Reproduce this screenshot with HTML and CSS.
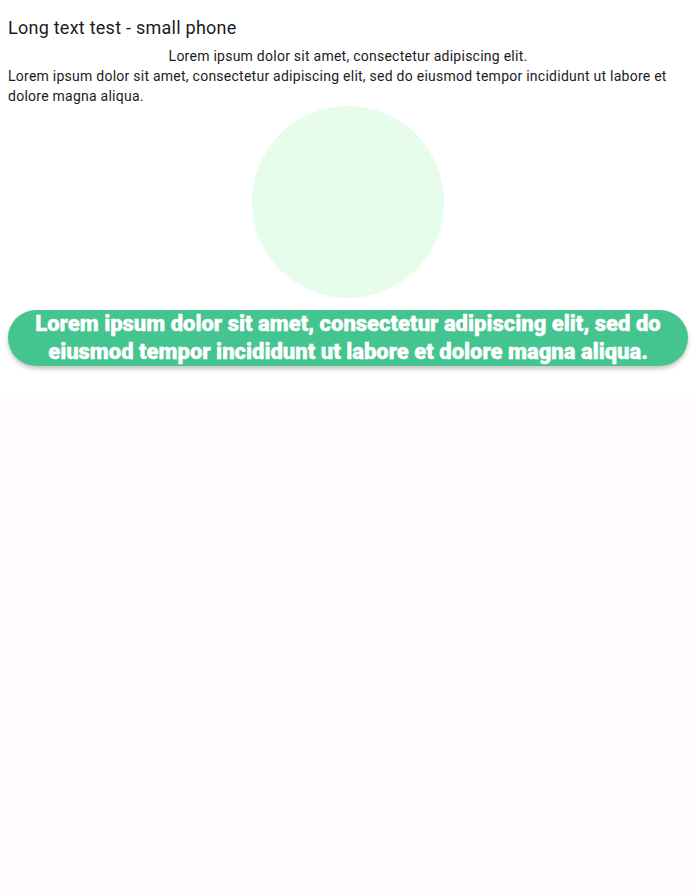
FILE: index.html
```html
<!DOCTYPE html>
<html>
<head>
<meta charset="utf-8">
<link rel="stylesheet" href="styles.css">
</head>
<body>
<div class="screen">
  <h1 class="title">Long text test - small phone</h1>
  <p class="centered">Lorem ipsum dolor sit amet, consectetur adipiscing elit.</p>
  <p class="body">Lorem ipsum dolor sit amet, consectetur adipiscing elit, sed do eiusmod tempor incididunt ut labore et dolore magna aliqua.</p>
  <div class="circle-row"><div class="circle"></div></div>
  <button class="cta">Lorem ipsum dolor sit amet, consectetur adipiscing elit, sed do eiusmod tempor incididunt ut labore et dolore magna aliqua.</button>
</div>
</body>
</html>
```

FILE: styles.css
```css
html, body {
  margin: 0;
  padding: 0;
  background: #fffbfe;
  height: 100%;
}
body {
  font-family: Roboto, "Noto Sans", sans-serif;
  color: #1c1b1f;
}
.screen {
  background: #ffffff;
  padding: 16px 8px 26px;
  display: flex;
  flex-direction: column;
}
.title {
  margin: 0;
  font-size: 18px;
  font-weight: 400;
  line-height: 24px;
  letter-spacing: 0.25px;
}
.centered {
  margin: 6px 0 0;
  font-size: 14px;
  line-height: 20px;
  letter-spacing: 0.25px;
  text-align: center;
}
.body {
  margin: 0;
  font-size: 14px;
  line-height: 20px;
  letter-spacing: 0.25px;
}
.circle-row {
  display: flex;
  justify-content: center;
}
.circle {
  width: 192px;
  height: 192px;
  border-radius: 50%;
  background: #e6fdeb;
}
.cta {
  margin-top: 12px;
  border: none;
  border-radius: 28px;
  background: #44c48f;
  color: #ffffff;
  font-family: Roboto, sans-serif;
  font-weight: 900;
  font-size: 22px;
  line-height: 28px;
  padding: 0 16px;
  text-align: center;
  -webkit-text-stroke: 0.4px #ffffff;
  box-shadow: 0 3px 4px rgba(0, 0, 0, 0.22);
}
```
